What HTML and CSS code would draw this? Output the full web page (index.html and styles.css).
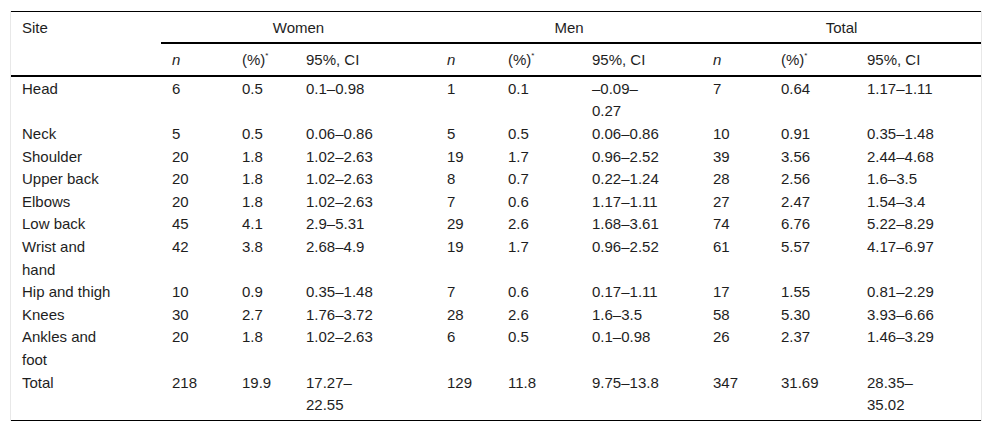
FILE: index.html
```html
<!DOCTYPE html>
<html lang="en">
<head>
<meta charset="utf-8">
<title>Site table</title>
<link rel="stylesheet" href="styles.css">
</head>
<body>
<div class="wrap">
<table class="data">
<colgroup>
<col class="c-site">
<col class="c-wn"><col class="c-wp"><col class="c-wci">
<col class="c-mn"><col class="c-mp"><col class="c-mci">
<col class="c-tn"><col class="c-tp"><col class="c-tci">
</colgroup>
<thead>
<tr>
<th rowspan="2" class="site">Site</th>
<th colspan="3" class="grp">Women</th>
<th colspan="3" class="grp">Men</th>
<th colspan="3" class="grp">Total</th>
</tr>
<tr class="sub">
<th><i>n</i></th><th>(%)<sup>*</sup></th><th>95%, CI</th>
<th><i>n</i></th><th>(%)<sup>*</sup></th><th>95%, CI</th>
<th><i>n</i></th><th>(%)<sup>*</sup></th><th>95%, CI</th>
</tr>
</thead>
<tbody>
<tr><td>Head</td><td>6</td><td>0.5</td><td>0.1–0.98</td><td>1</td><td>0.1</td><td>–0.09–<br>0.27</td><td>7</td><td>0.64</td><td>1.17–1.11</td></tr>
<tr><td>Neck</td><td>5</td><td>0.5</td><td>0.06–0.86</td><td>5</td><td>0.5</td><td>0.06–0.86</td><td>10</td><td>0.91</td><td>0.35–1.48</td></tr>
<tr><td>Shoulder</td><td>20</td><td>1.8</td><td>1.02–2.63</td><td>19</td><td>1.7</td><td>0.96–2.52</td><td>39</td><td>3.56</td><td>2.44–4.68</td></tr>
<tr><td>Upper back</td><td>20</td><td>1.8</td><td>1.02–2.63</td><td>8</td><td>0.7</td><td>0.22–1.24</td><td>28</td><td>2.56</td><td>1.6–3.5</td></tr>
<tr><td>Elbows</td><td>20</td><td>1.8</td><td>1.02–2.63</td><td>7</td><td>0.6</td><td>1.17–1.11</td><td>27</td><td>2.47</td><td>1.54–3.4</td></tr>
<tr><td>Low back</td><td>45</td><td>4.1</td><td>2.9–5.31</td><td>29</td><td>2.6</td><td>1.68–3.61</td><td>74</td><td>6.76</td><td>5.22–8.29</td></tr>
<tr><td>Wrist and<br>hand</td><td>42</td><td>3.8</td><td>2.68–4.9</td><td>19</td><td>1.7</td><td>0.96–2.52</td><td>61</td><td>5.57</td><td>4.17–6.97</td></tr>
<tr><td>Hip and thigh</td><td>10</td><td>0.9</td><td>0.35–1.48</td><td>7</td><td>0.6</td><td>0.17–1.11</td><td>17</td><td>1.55</td><td>0.81–2.29</td></tr>
<tr><td>Knees</td><td>30</td><td>2.7</td><td>1.76–3.72</td><td>28</td><td>2.6</td><td>1.6–3.5</td><td>58</td><td>5.30</td><td>3.93–6.66</td></tr>
<tr><td>Ankles and<br>foot</td><td>20</td><td>1.8</td><td>1.02–2.63</td><td>6</td><td>0.5</td><td>0.1–0.98</td><td>26</td><td>2.37</td><td>1.46–3.29</td></tr>
<tr><td>Total</td><td>218</td><td>19.9</td><td>17.27–<br>22.55</td><td>129</td><td>11.8</td><td>9.75–13.8</td><td>347</td><td>31.69</td><td>28.35–<br>35.02</td></tr>
</tbody>
</table>
</div>
</body>
</html>
```

FILE: styles.css
```css
html, body {
  margin: 0;
  padding: 0;
  background: #ffffff;
}

body {
  font-family: "Liberation Sans", Arial, sans-serif;
  font-size: 15px;
  color: #1e1e1e;
}

.wrap {
  margin: 11px 0 0 10px;
  width: 972px;
  box-sizing: border-box;
  border-left: 1px solid #e8e8e8;
  border-right: 1px solid #e8e8e8;
}

.data {
  width: 970px;
  table-layout: fixed;
  border-collapse: collapse;
  border-top: 1px solid #000;
  border-bottom: 1px solid #000;
}

.c-site { width: 150px; }
.c-wn { width: 70px; }
.c-wp { width: 64px; }
.c-wci { width: 141px; }
.c-mn { width: 61px; }
.c-mp { width: 84px; }
.c-mci { width: 121px; }
.c-tn { width: 68px; }
.c-tp { width: 86px; }
.c-tci { width: 125px; }

.data th {
  font-weight: normal;
  text-align: left;
  vertical-align: top;
  padding: 5px 11px 3px;
  line-height: 22.4px;
}

.data th.grp {
  text-align: center;
  border-bottom: 2px solid #000;
}

.data th.site,
.data tr.sub th {
  border-bottom: 2px solid #000;
}

.data sup {
  font-size: 8px;
  vertical-align: 7px;
  line-height: 0;
}

.data td {
  vertical-align: top;
  padding: 0 11px;
  line-height: 22.6px;
}

.data tbody tr:first-child td {
  padding-top: 1px;
}

.data tbody tr:last-child td {
  padding-bottom: 3px;
}
```
